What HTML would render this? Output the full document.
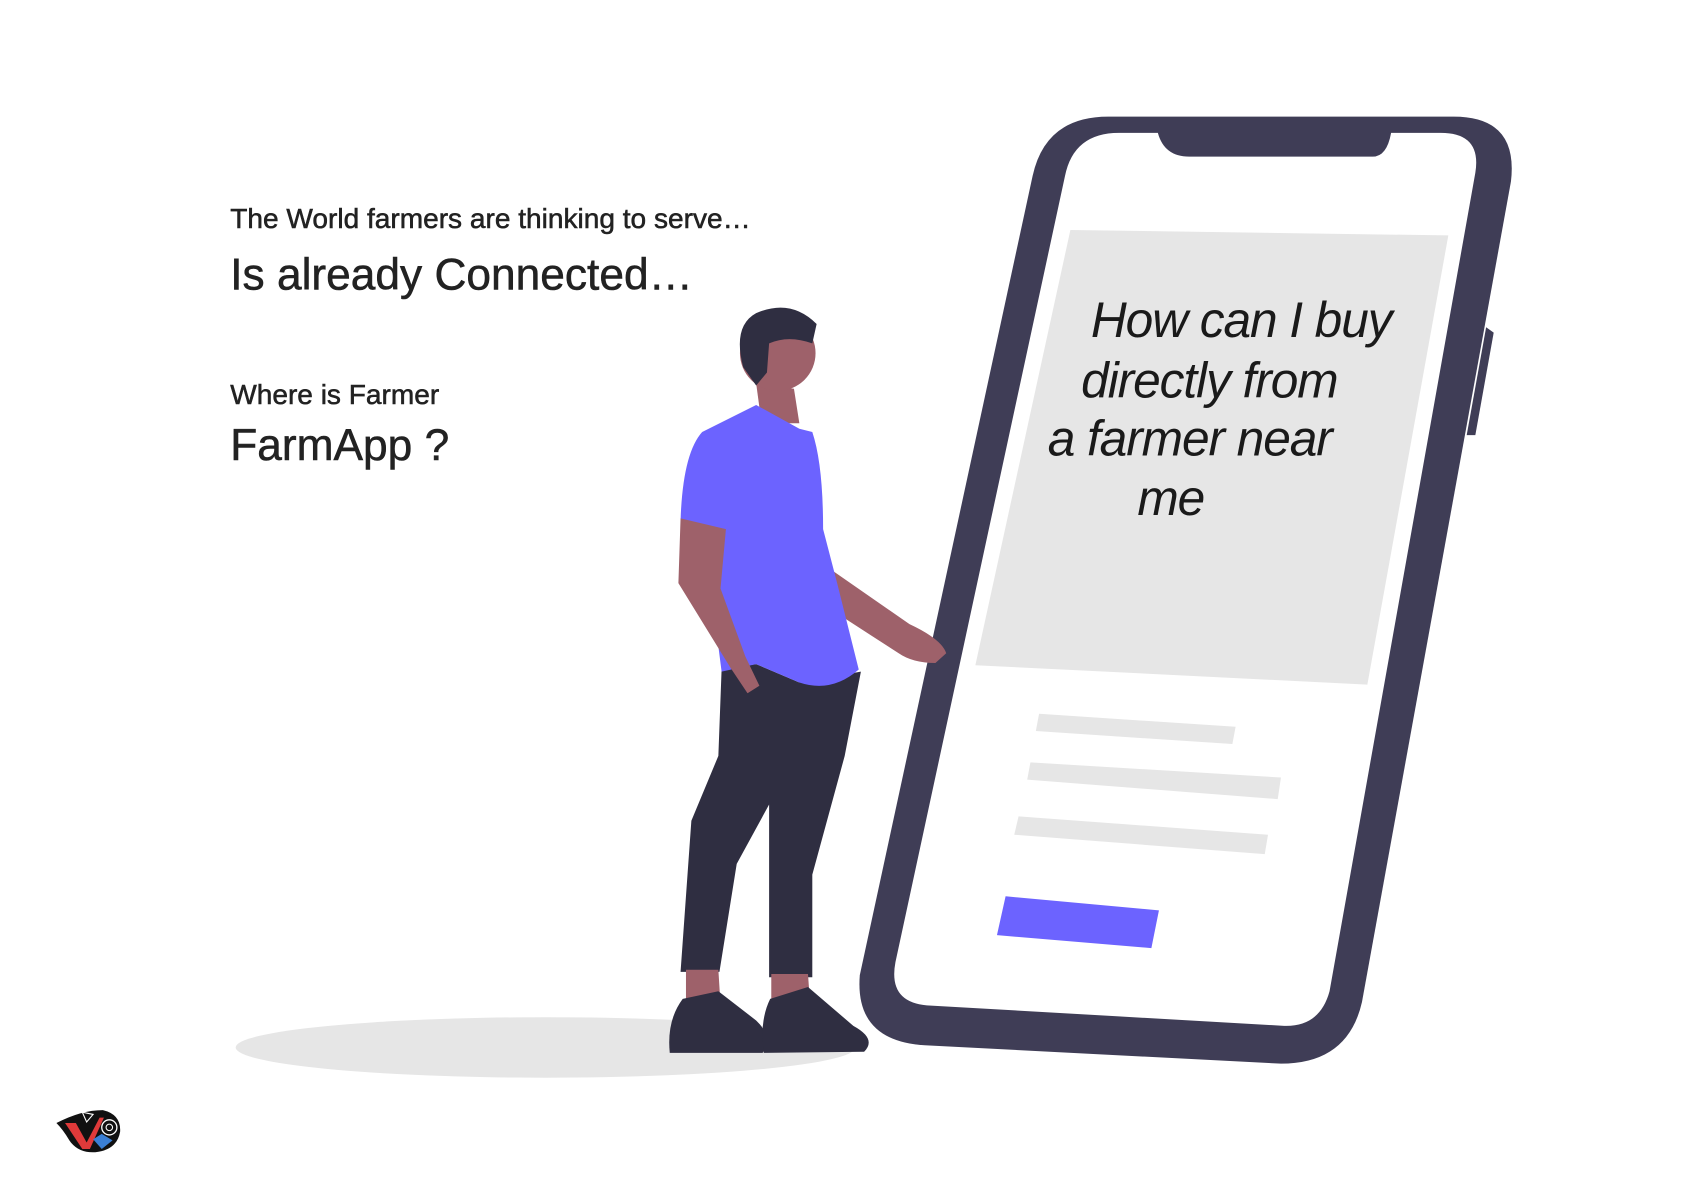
<!DOCTYPE html>
<html><head><meta charset="utf-8"><style>
html,body{margin:0;padding:0;background:#fff;}
svg{display:block;}
</style></head><body>
<svg width="1684" height="1190" viewBox="0 0 1559 1102" xmlns="http://www.w3.org/2000/svg">
<rect width="1559" height="1102" fill="#fff"/>
<g font-family="Liberation Sans, sans-serif" fill="#222" stroke="#222" stroke-width="0.5">
<text x="213" y="211" font-size="26">The World farmers are thinking to serve…</text>
<text x="213" y="268" font-size="41">Is already Connected…</text>
<text x="213" y="374" font-size="26">Where is Farmer</text>
<text x="213" y="426" font-size="41">FarmApp ?</text>
</g>
<ellipse cx="505" cy="970" rx="287" ry="28" fill="#e6e6e6"/>
<g transform="translate(-4,-2)">
<path d="M1030,110 L1350,110 Q1410,110 1403,170 L1265,930 Q1252,987 1190,987 L860,970 Q795,966 800,905 L960,165 Q972,110 1030,110 Z" fill="#3f3d56"/>
<polygon points="1380,305 1387,310 1370,405 1362,405" fill="#3f3d56"/>
<path d="M1040,125 L1076,125 Q1082,147 1105,147 L1275,147 Q1288,147 1292,125 L1338,125 Q1376,125 1370,162 L1235,920 Q1226,953 1193,952 L862,933 Q826,930 833,893 L990,165 Q998,125 1040,125 Z" fill="#fff"/>
<polygon points="995,215 1345,220 1270,636 907,618" fill="#e6e6e6"/>
<polygon points="966,663 1148,675 1145,691 963,679" fill="#e6e6e6"/>
<polygon points="958,708 1190,722 1187,742 955,724" fill="#e6e6e6"/>
<polygon points="947,758 1178,775 1175,793 943,775" fill="#e6e6e6"/>
<polygon points="935,832 1077,845 1070,880 927,868" fill="#6c63ff"/>
<g font-family="Liberation Sans, sans-serif" font-style="italic" font-size="46" fill="#1a1a1a" letter-spacing="-1">
<text x="1014" y="314">How can I buy</text>
<text x="1005" y="370">directly from</text>
<text x="974" y="424">a farmer near</text>
<text x="1057" y="479">me</text>
</g>
</g>
<!-- person -->
<polygon points="700,355 735,360 740,392 705,392" fill="#9e616a"/>
<circle cx="720" cy="327" r="35" fill="#9e616a"/>
<path d="M688,340 Q678,302 700,290 Q732,276 756,300 L752,318 Q730,310 712,318 L710,345 L700,357 Z" fill="#2f2e41"/>
<path d="M770,528 L842,578 Q872,592 876,605 L866,614 Q845,614 832,605 L778,570 Z" fill="#9e616a"/>
<path d="M668,620 L700,615 L740,632 L797,622 L782,700 L752,810 L752,905 L712,905 L712,810 L712,745 L682,800 L666,900 L630,900 L640,760 L665,700 Z" fill="#2f2e41"/>
<path d="M700,375 L740,397 L752,400 Q762,430 762,490 L775,540 L795,620 Q770,642 740,632 L700,615 L668,622 L662,575 L665,492 L630,482 Q632,420 650,400 Z" fill="#6c63ff"/>
<path d="M630,480 L672,490 L667,545 L690,608 L703,635 L692,642 L676,618 L628,540 Z" fill="#9e616a"/>
<polygon points="635,898 665,898 667,930 635,932" fill="#9e616a"/>
<polygon points="714,902 748,902 750,930 714,932" fill="#9e616a"/>
<path d="M632,925 L665,918 L700,945 Q716,960 706,975 L620,975 Q617,945 632,925 Z" fill="#2f2e41"/>
<path d="M713,925 L748,914 L790,950 Q812,962 800,974 L707,975 Q703,945 713,925 Z" fill="#2f2e41"/>
<!-- logo -->
<path d="M52,1040 Q75,1028 95,1028 Q112,1032 111,1048 Q108,1065 88,1067 Q72,1068 64,1056 Q58,1046 52,1040 Z" fill="#111"/>
<path d="M60,1040 L70,1040 L80,1058 L92,1035 L96,1035 L83,1064 L76,1064 Z" fill="#e03a3a"/>
<path d="M86,1055 L94,1050 L104,1056 L94,1064 Z" fill="#3a7fd5"/>
<circle cx="101" cy="1044" r="7" fill="none" stroke="#fff" stroke-width="1.2"/>
<circle cx="101" cy="1044" r="3" fill="none" stroke="#fff" stroke-width="1"/>
<path d="M76,1030 L86,1032 L80,1039 Z" fill="none" stroke="#fff" stroke-width="1"/>
</svg>
</body></html>
